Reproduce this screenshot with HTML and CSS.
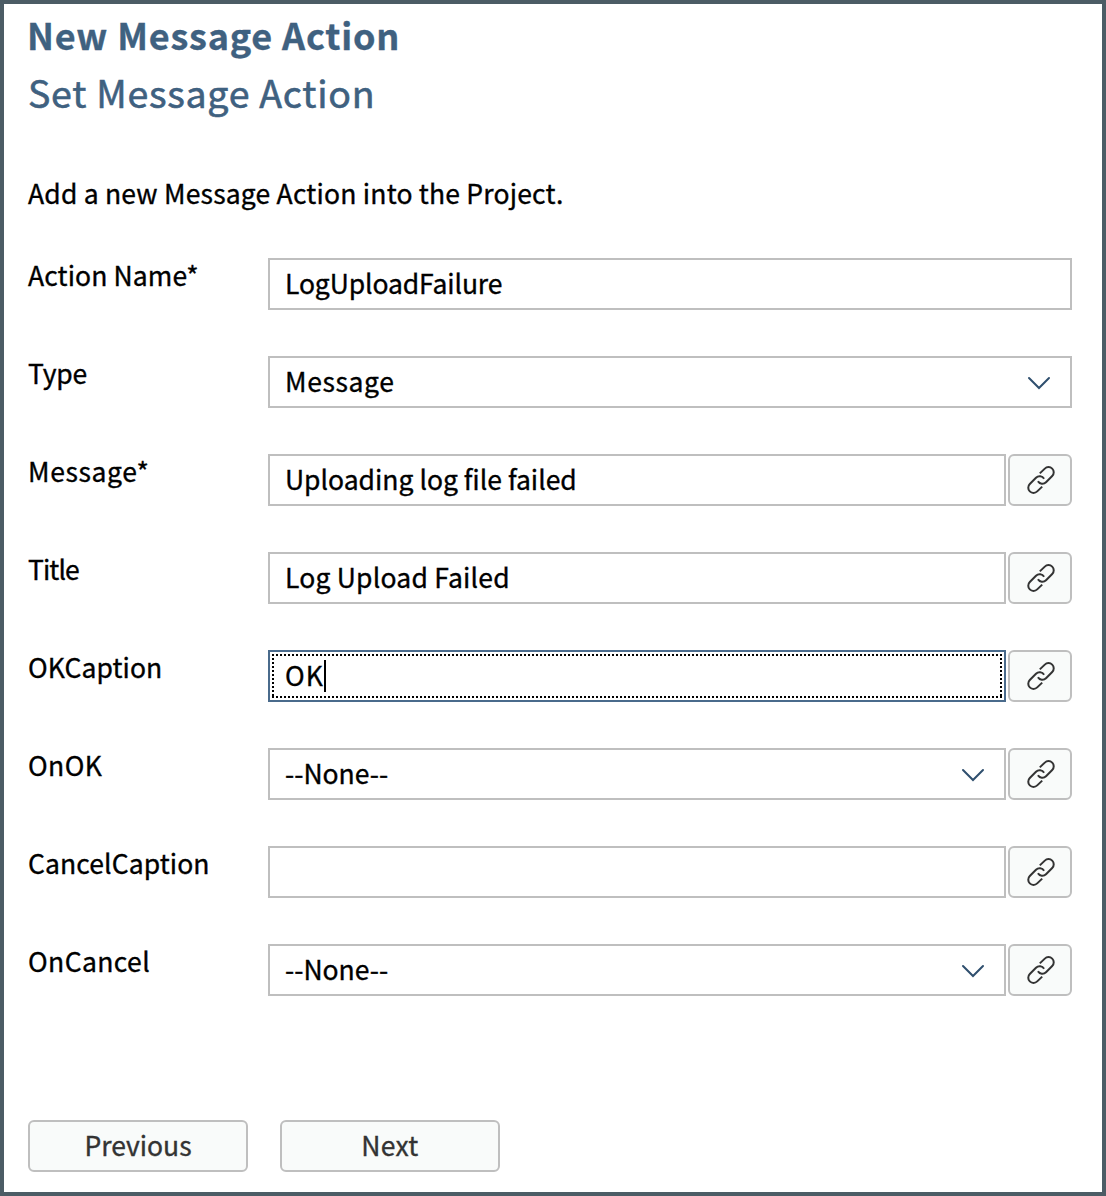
FILE: index.html
```html
<!DOCTYPE html>
<html lang="en">
<head>
<meta charset="utf-8">
<title>New Message Action</title>
<link rel="stylesheet" href="styles.css">
</head>
<body>
<svg class="sprite" width="0" height="0" aria-hidden="true">
  <symbol id="link" viewBox="0 0 28 28"><path d="M12.8 7.4 17.8 2.6A5.2 5.2 0 0 1 25.2 10L19 16.2A5.2 5.2 0 0 1 10.9 15.2M15.2 20.6 10.2 25.4A5.2 5.2 0 0 1 2.8 18L9 11.8A5.2 5.2 0 0 1 17.1 12.8"/></symbol>
  <symbol id="chevron" viewBox="0 0 24 14"><path d="M2 2 12 12 22 2"/></symbol>
</svg>
<main class="dialog">
  <h1 class="title"><span class="t-title">New Message Action</span></h1>
  <h2 class="subtitle"><span class="t-subtitle">Set Message Action</span></h2>
  <p class="intro"><span class="t-intro">Add a new Message Action into the Project.</span></p>
  <div class="form">
    <div class="row"><div class="label"><span class="t-name">Action Name*</span></div><div class="field"><span class="t-upload">LogUploadFailure</span></div></div>
    <div class="row"><div class="label"><span class="t-type">Type</span></div><div class="field"><span class="t-message">Message</span><svg class="chevron"><use href="#chevron"/></svg></div></div>
    <div class="row"><div class="label"><span class="t-message">Message*</span></div><div class="field"><span>Uploading log file failed</span></div><div class="bind"><svg class="link"><use href="#link"/></svg></div></div>
    <div class="row"><div class="label"><span class="t-titlelabel">Title</span></div><div class="field"><span class="t-failed">Log Upload Failed</span></div><div class="bind"><svg class="link"><use href="#link"/></svg></div></div>
    <div class="row"><div class="label"><span class="t-name">OKCaption</span></div><div class="field focused"><span class="t-ok">OK</span><i class="caret"></i></div><div class="bind"><svg class="link"><use href="#link"/></svg></div></div>
    <div class="row"><div class="label"><span class="t-on">OnOK</span></div><div class="field"><span>--None--</span><svg class="chevron"><use href="#chevron"/></svg></div><div class="bind"><svg class="link"><use href="#link"/></svg></div></div>
    <div class="row"><div class="label"><span class="t-name">CancelCaption</span></div><div class="field"></div><div class="bind"><svg class="link"><use href="#link"/></svg></div></div>
    <div class="row"><div class="label"><span class="t-on">OnCancel</span></div><div class="field"><span>--None--</span><svg class="chevron"><use href="#chevron"/></svg></div><div class="bind"><svg class="link"><use href="#link"/></svg></div></div>
  </div>
  <div class="actions">
    <div class="button"><span>Previous</span></div>
    <div class="button"><span class="t-next">Next</span></div>
  </div>
</main>
</body>
</html>
```
FILE: styles.css
```css
* { box-sizing: border-box; }
body { margin: 0; background: #fff; }
.sprite { position: absolute; }
.dialog {
  width: 1106px;
  height: 1196px;
  padding: 1px 30px 0 24px;
  border: 4px solid #4c5c65;
  font: 26.5px/40px "Noto Sans CJK SC", "Noto Sans", sans-serif;
  color: #000;
  white-space: nowrap;
  -webkit-text-stroke: 0.35px currentColor;
}
.title, .subtitle { margin: 0; line-height: 58px; color: #3f6180; -webkit-text-stroke-color: #3f6180; }
.title { margin-left: -1px; font-size: 36px; font-weight: 700; }
.subtitle { font-size: 37.5px; font-weight: 400; -webkit-text-stroke-width: 0.6px; }
.intro { margin: 52px 0 45px; }

/* Tracking per text */
.t-title { letter-spacing: 0.8px; }
.t-subtitle { letter-spacing: 0.74px; }
.t-intro { letter-spacing: 0.2px; }
.t-name { letter-spacing: 0.1px; }
.t-upload { letter-spacing: -0.12px; }
.t-type { letter-spacing: -0.2px; }
.t-message { letter-spacing: 0.62px; }
.t-titlelabel { letter-spacing: -0.9px; }
.t-failed { letter-spacing: 0.2px; }
.t-ok { letter-spacing: 1px; }
.t-on { letter-spacing: 0.4px; }
.t-next { letter-spacing: 0.3px; }

.form { display: grid; row-gap: 46px; }
.row { display: flex; height: 52px; }
.label { width: 240px; line-height: 33px; }
.field {
  flex: 1;
  display: flex;
  align-items: center;
  padding: 0 19px 3px 15px;
  border: 2px solid #bfbfbf;
}
.chevron {
  width: 24px;
  height: 14px;
  margin: 4px 0 0 auto;
  fill: none;
  stroke: #2f4f6e;
  stroke-width: 2;
  stroke-linecap: round;
}
.bind {
  width: 64px;
  margin-left: 2px;
  padding-left: 2px;
  display: flex;
  align-items: center;
  justify-content: center;
  border: 2px solid #bfbfbf;
  border-radius: 6px;
  background: #f9fbfa;
}
.link { width: 28px; height: 28px; fill: none; stroke: #333; stroke-width: 2; }
.focused {
  border-color: #4a6b8c;
  background:
    repeating-linear-gradient(90deg, #000 0 2px, transparent 2px 4px) 2px 2px / 730px 2px no-repeat,
    repeating-linear-gradient(90deg, #000 0 2px, transparent 2px 4px) 2px 44px / 730px 2px no-repeat,
    repeating-linear-gradient(#000 0 2px, transparent 2px 4px) 2px 2px / 2px 44px no-repeat,
    repeating-linear-gradient(#000 0 2px, transparent 2px 4px) 730px 2px / 2px 44px no-repeat;
}
.caret { width: 2px; height: 32px; margin-top: 3px; background: #000; }
.actions { display: flex; gap: 32px; margin-top: 124px; }
.button {
  width: 220px;
  height: 52px;
  display: flex;
  align-items: center;
  justify-content: center;
  padding-bottom: 3px;
  border: 2px solid #bfbfbf;
  border-radius: 6px;
  background: #f9fbfa;
  color: #333;
  -webkit-text-stroke-color: #333;
}
```
